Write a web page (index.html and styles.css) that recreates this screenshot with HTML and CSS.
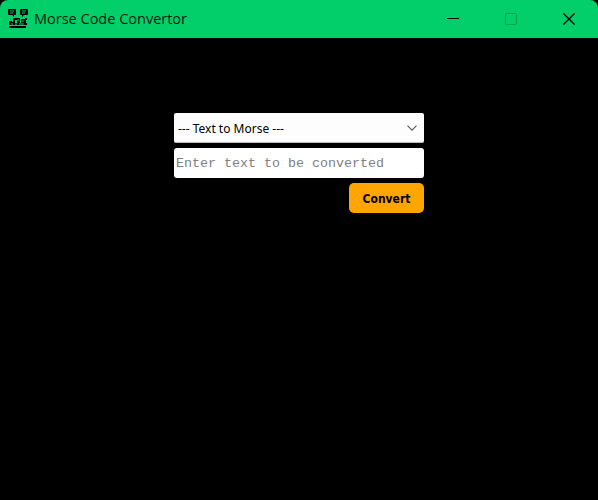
FILE: index.html
```html
<!DOCTYPE html>
<html lang="en">
<head>
<meta charset="utf-8">
<title>Morse Code Convertor</title>
<link rel="stylesheet" href="styles.css">
</head>
<body>
<div class="window">
  <header class="titlebar">
    <svg class="app-icon" width="20" height="20" viewBox="0 0 20 20">
      <path d="M1 0h6q1 0 1 1v4q0 1-1 1H6v2L4 6H1Q0 6 0 5V1q0-1 1-1zM13 0h6q1 0 1 1v4q0 1-1 1h-3l-2 2V6h-1q-1 0-1-1V1q0-1 1-1z"/>
      <path class="icon-cut" d="M2 2h4M2 4h3M14 2h4M14 4h3"/>
      <path d="M1 12h3v1h1V9h3v2H7v3h2v-3H8V9h4v5h1v-4h4V9h2v2h-1v3h1v2H1zM1 17h17v2H1z"/>
      <path class="icon-cut" d="M10 10v2M14 12h2M3 15h2M7 15h2M11 15h5"/>
    </svg>
    <span class="title">Morse Code Convertor</span>
    <div class="controls">
      <svg width="12" height="12" viewBox="0 0 12 12"><path d="M0 5.5h12" stroke="#000"/></svg>
      <svg width="12" height="12" viewBox="0 0 12 12"><rect x=".5" y=".5" width="11" height="11" rx="1" fill="none" stroke="#02a151"/></svg>
      <svg width="12" height="12" viewBox="0 0 12 12"><path d="M.4.4l11.2 11.2M11.6.4L.4 11.6" stroke="#000" stroke-width="1.3"/></svg>
    </div>
  </header>
  <main class="content">
    <div class="select"><span>--- Text to Morse ---</span>
      <svg width="10" height="6" viewBox="0 0 10 6"><path d="M.5.7L5 5.2 9.5.7" fill="none" stroke="#555" stroke-width="1.1"/></svg>
    </div>
    <input class="entry" type="text" placeholder="Enter text to be converted">
    <button class="convert">Convert</button>
  </main>
</div>
</body>
</html>
```
FILE: styles.css
```css
* { box-sizing: border-box; }
body { margin: 0; background: #000; }
.window {
  height: 500px;
  display: flex;
  flex-direction: column;
  background: #000;
  border-radius: 8px 8px 0 0;
  overflow: hidden;
}
.titlebar {
  height: 38px;
  flex: none;
  display: flex;
  align-items: center;
  padding: 0 23px 0 8px;
  background: #02cf69;
}
.app-icon { margin-right: 6px; }
.icon-cut { stroke: #02cf69; fill: none; }
.title {
  font: 14.5px/20px "Open Sans", sans-serif;
  color: #001a0d;
  white-space: nowrap;
}
.controls { margin-left: auto; display: flex; gap: 46px; }
.content {
  width: 250px;
  margin: 75px 0 0 174px;
  display: flex;
  flex-direction: column;
  gap: 5px;
}
.select {
  height: 30px;
  display: flex;
  align-items: center;
  justify-content: space-between;
  padding: 1px 7px 0 4px;
  background: #fdfdfd;
  border-bottom: 1px solid #bbb;
  border-radius: 2px;
  font: 12px "Noto Sans", sans-serif;
  color: #000;
}
.entry {
  height: 30px;
  width: 100%;
  padding: 0 2px;
  border: 0;
  border-radius: 3px;
  background: #fff;
  font: 13.33px "Liberation Mono", monospace;
}
.entry::placeholder { color: #808080; opacity: 1; }
.convert {
  align-self: flex-end;
  width: 75px;
  height: 30px;
  padding: 1px 0 0;
  border: 0;
  border-radius: 5px;
  background: #ffa500;
  color: #000;
  font: bold 12px "DejaVu Sans Condensed", "DejaVu Sans", sans-serif;
}
```
